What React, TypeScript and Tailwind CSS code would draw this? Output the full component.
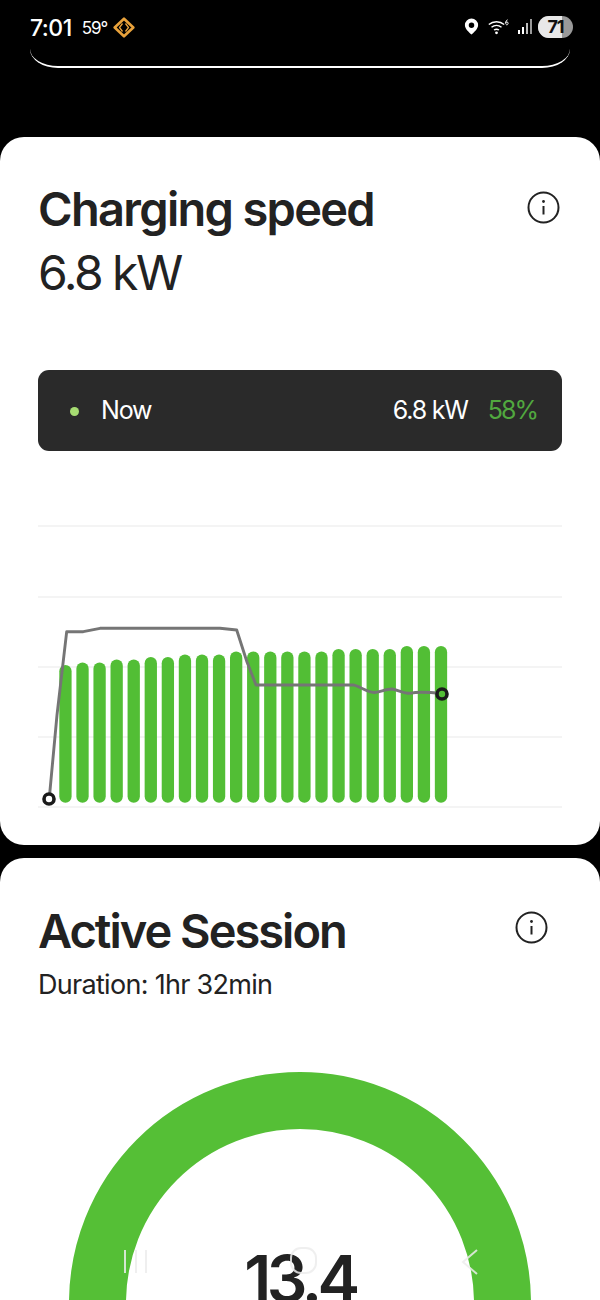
const FONT = "font-['Inter',sans-serif]"

const BAR_TOPS = [
  665, 662.5, 662.5, 659.5, 659.5, 657, 657, 654.5, 654.5, 654.5, 651.5, 651.5, 651.5, 651.5, 651.5, 651.5,
  649, 649, 649, 649, 646, 646, 646,
]
const GRID_LINES = [526, 597, 667, 737, 807]

function InfoIcon() {
  return (
    <svg width="33" height="33" viewBox="0 0 33 33" fill="none" stroke="#222222" strokeWidth="2">
      <circle cx="16.5" cy="16.5" r="15" />
      <path d="M16.5 15v8.500" />
      <circle cx="16.5" cy="10.500" r="1.400" fill="#222222" stroke="none" />
    </svg>
  )
}

function RivianLogo() {
  return (
    <svg width="22" height="21" viewBox="0 0 22 21" fill="none" stroke="#e9a23b">
      <path d="M11 1.700 L20.300 10.500 L11 19.300 L1.700 10.500 Z" strokeWidth="2.600" strokeLinejoin="round" />
      <path d="M9.500 6.500 L6.500 10.500 L9.500 14.500 M12.500 6.500 L15.500 10.500 L12.500 14.500" strokeWidth="1.300" />
    </svg>
  )
}

function StatusIcons() {
  return (
    <div className="flex items-center -mt-[3px]">
      <svg width="15" height="17" viewBox="0 0 15 18" className="mr-[9px]">
        <path
          fillRule="evenodd"
          d="M7.500 0.500a7 7 0 0 1 7 7c0 4-4.500 8-7 10c-2.500-2-7-6-7-10a7 7 0 0 1 7-7zM7.500 4.700a2.900 2.900 0 1 0 0 5.800a2.900 2.900 0 0 0 0-5.800z"
          fill="#ffffff"
        />
      </svg>
      <svg width="21" height="16" viewBox="0 0 21 16" fill="none" stroke="#ffffff" strokeWidth="1.400" className="mr-[9px]">
        <path d="M0.800 5.500a12 12 0 0 1 15.400 0M3.500 8.300a8 8 0 0 1 10 0M6 11a4.500 4.500 0 0 1 5 0" />
        <circle cx="8.500" cy="13.800" r="1.400" fill="#ffffff" stroke="none" />
        <path d="M19.600 0.800c-1.300 0.400-1.900 1.700-1.900 3.200c0 1.100 0.500 1.800 1.200 1.800s1.200-0.700 1.200-1.500s-0.500-1.400-1.200-1.400s-1.200 0.500-1.200 1" strokeWidth="1" />
      </svg>
      <div className="flex items-end gap-[1.500px] mr-[6px] h-[15px]">
        <div className="w-[2.500px] h-[4px] bg-white" />
        <div className="w-[2.500px] h-[7px] bg-white" />
        <div className="w-[2.500px] h-[11px] bg-[#bbbbbb]" />
        <div className="w-[2.500px] h-[15px] bg-[#999999]" />
      </div>
      <div className="relative w-[35px] h-[22px] rounded-full overflow-hidden bg-[#999999] flex items-center justify-center">
        <div className="absolute left-0 top-0 bottom-0 w-[24px] bg-[#e8e8e8]" />
        <span className="relative text-[18px] font-bold text-[#111111] tracking-[-1px] leading-none">71</span>
      </div>
    </div>
  )
}

function SpeedChart() {
  return (
    <svg width="524" height="290" viewBox="38 522 524 290" className="block" fill="none">
      {GRID_LINES.map((y) => (
        <line key={y} x1="38" x2="562" y1={y} y2={y} stroke="#f1f1f1" strokeWidth="1.500" />
      ))}
      {BAR_TOPS.map((top, i) => (
        <rect key={i} x={59.3 + i * 17.07} y={top} width="12.300" height={802.7 - top} rx="6.150" fill="#52be35" />
      ))}
      <path
        d="M49.300 798 L57 715 L66.700 631.700 L83.300 631.700 L100 628.300 L220 628.300 L236.700 630 L247 662 L256 685 L353.300 685 C360 686 366 692 374 692.500 C380 692 386 689 392 689 C398 690 404 693.300 410 693.300 C416 692 424 691.700 441.700 693.500"
        stroke="#757575"
        strokeWidth="2.900"
        strokeLinejoin="round"
      />
      <circle cx="49" cy="799" r="5" fill="#ffffff" stroke="#1a1a1a" strokeWidth="3.600" />
      <circle cx="442" cy="694" r="5" fill="#52be35" stroke="#1a1a1a" strokeWidth="3.600" />
    </svg>
  )
}

function NavOverlay() {
  return (
    <svg
      width="600"
      height="32"
      viewBox="0 1245 600 32"
      className="absolute left-0 top-[1245px]"
      fill="none"
      stroke="#ececec"
      strokeOpacity="0.850"
      strokeWidth="2"
    >
      <path d="M125 1250v23M136 1250v23M146 1250v23" />
      <rect x="291" y="1248" width="25" height="25" rx="10" />
      <path d="M477 1250 L463 1262 L477 1274" />
    </svg>
  )
}

export default function App() {
  return (
    <div className={`${FONT} relative w-[600px] h-[1300px] overflow-hidden bg-black text-[#222222]`}>
      <header className="px-[30px]">
        <div className="flex items-center justify-between h-[47px] pt-[9px] -mr-[3px]">
          <div className="flex items-center text-white">
            <span className="text-[23px] font-medium leading-none tracking-[-0.5px]">7:01</span>
            <span className="text-[17px] leading-none ml-[10px] tracking-[-1px]">59°</span>
            <span className="ml-[6px] -mt-[2px]">
              <RivianLogo />
            </span>
          </div>
          <StatusIcons />
        </div>
        <div className="h-[21px] border-b-2 border-white rounded-b-[28px_19px]" />
      </header>

      <section className="mt-[69px] h-[708px] bg-white rounded-[24px] pl-[38px] pr-[38px] pt-[45px]">
        <div className="flex items-start justify-between">
          <div>
            <h2 className="text-[47px] leading-[54px] font-semibold tracking-[-1.700px]">Charging speed</h2>
            <p className="text-[48px] leading-[56px] mt-[9px] tracking-[-2.500px]">6.8 kW</p>
          </div>
          <div className="mt-[9px] mr-[2px]">
            <InfoIcon />
          </div>
        </div>
        <div className="mt-[69px] h-[81px] rounded-[11px] bg-[#2a2a2a] flex items-center pl-[32px] pr-[25px] pt-[1px] text-[25px] tracking-[-1.200px] text-white">
          <div className="w-[9px] h-[9px] rounded-full bg-[#a6dc72]" />
          <span className="ml-[22px]">Now</span>
          <span className="ml-auto">6.8 kW</span>
          <span className="ml-[20px] text-[#51a83f] tracking-[-2px]">58%</span>
        </div>
        <div className="mt-[71px]">
          <SpeedChart />
        </div>
      </section>

      <section className="mt-[13px] h-[442px] bg-white rounded-t-[24px] overflow-hidden flex flex-col">
        <div className="pl-[38px] pr-[52px] pt-[46px]">
          <div className="flex items-start justify-between">
            <h2 className="text-[47px] leading-[54px] font-semibold tracking-[-2px]">Active Session</h2>
            <div className="mt-[7px]">
              <InfoIcon />
            </div>
          </div>
          <p className="text-[27px] leading-[32px] mt-[11px] tracking-[-0.700px]">Duration: 1hr 32min</p>
        </div>
        <div className="mt-[71px] self-center shrink-0 w-[462px] h-[462px] rounded-full border-[57px] border-[#55bf36] flex justify-center pt-[118px]">
          <span className="text-[64px] leading-none font-semibold text-[#222222] tracking-[-4.500px]">13.4</span>
        </div>
      </section>

      <NavOverlay />
    </div>
  )
}
